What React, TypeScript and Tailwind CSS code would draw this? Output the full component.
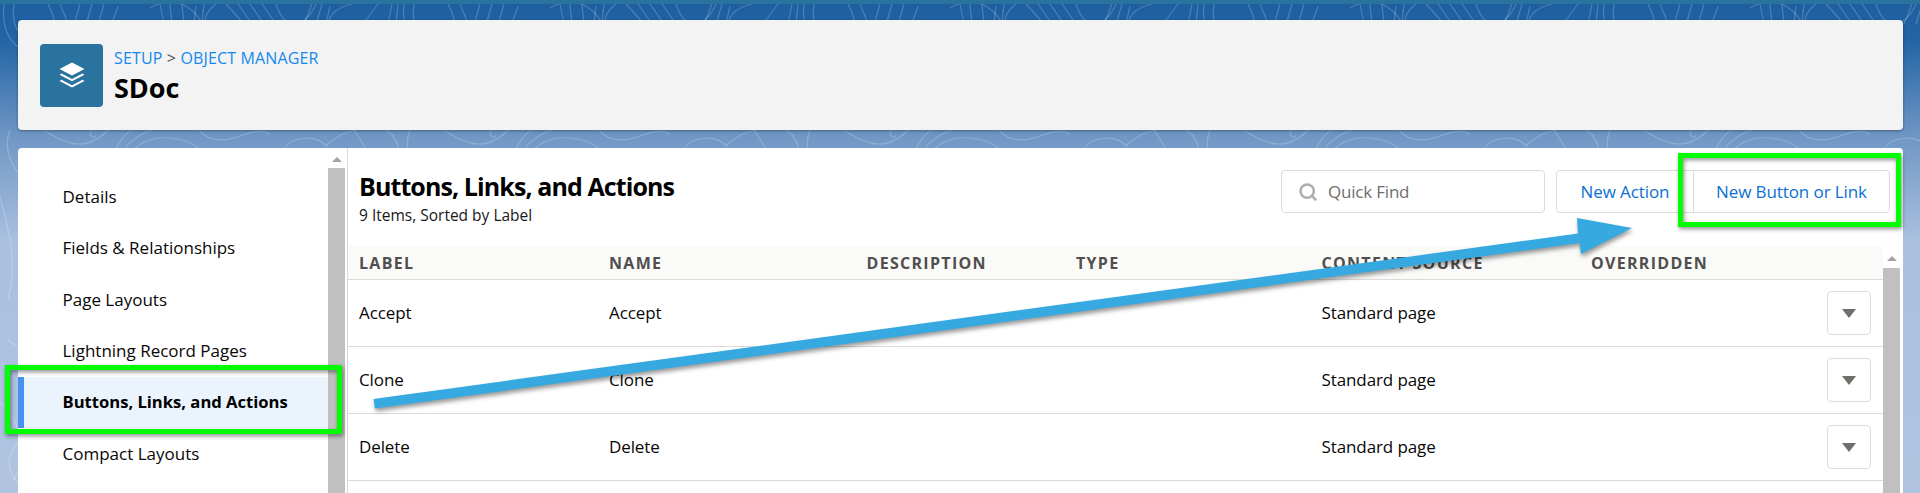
import { Search } from 'lucide-react'

const SIDE_ITEMS = ['Details', 'Fields & Relationships', 'Page Layouts', 'Lightning Record Pages', 'Buttons, Links, and Actions', 'Compact Layouts']
const COLUMNS = ['LABEL', 'NAME', 'DESCRIPTION', 'TYPE', 'CONTENT SOURCE', 'OVERRIDDEN']
const ROWS = ['Accept', 'Clone', 'Delete']
const GRID = 'grid grid-cols-[250px_257.5px_209.5px_245.5px_269.5px_1fr] pl-[11px] pr-3'

// contour lines behind the cards, one tile gets repeated over the page
const CONTOURS = [
  'M14 4C10 30 24 44 42 40S56 20 48 4',
  'M4 4C0 44 24 58 52 52S68 22 60 4',
  'M80 4L64 60M92 4L76 60M104 4L88 60M118 6L100 56',
  'M150 8C170 -4 196 0 210 40',
  'M160 4L164 24M170 4L172 24M182 4L184 24',
  'M196 6L192 40M204 4L200 40',
  'M216 4C208 10 206 14 204 24',
  'M226 4L244 24M238 4L252 24M250 4L264 24M262 4L276 24',
  'M276 4C284 30 304 30 316 4',
  'M312 4L304 24M322 4L316 24M330 6L326 24',
  'M352 4C336 8 330 14 328 24',
  'M378 4C372 12 370 16 362 24',
  'M392 4L388 24M398 4L396 24',
  'M10 130C2 150 14 180 40 186M-4 180C4 220 20 250 8 300',
  'M44 130C70 148 90 150 110 128C96 118 74 120 60 126',
  'M92 130C88 134 92 140 96 136',
  'M114 152C122 136 130 130 136 128M122 152C130 140 140 134 152 130',
  'M132 152C146 134 180 132 204 152',
  'M198 128C206 142 224 142 240 136C250 132 262 130 270 134',
  'M284 150C290 136 316 134 326 146C336 136 344 132 366 128',
  'M354 130L368 152M386 130C396 136 398 146 400 152',
  'M8 340C40 360 60 410 20 440C0 460 10 480 30 493',
  'M-2 400C20 420 30 450 14 480',
]

function Contours() {
  return (
    <svg className="absolute inset-0 h-full w-full" aria-hidden>
      <defs>
        <pattern id="topo" width="400" height="493" patternUnits="userSpaceOnUse">
          {CONTOURS.map(d => (
            <path key={d} d={d} fill="none" stroke="#fff" strokeOpacity="0.2" strokeWidth="1.2" />
          ))}
        </pattern>
      </defs>
      <rect width="100%" height="100%" fill="url(#topo)" />
    </svg>
  )
}

function StackIcon() {
  return (
    <svg viewBox="0 0 26 26" className="h-[26px] w-[26px]" fill="#fff" aria-hidden>
      <path d="M13 0.5L25.5 7L13 13.5L0.5 7Z" />
      <path d="M2.5 11.5L13 17L23.5 11.5L25.5 12.8L13 19.3L0.5 12.8Z" />
      <path d="M2.5 17.7L13 23.2L23.5 17.7L25.5 19L13 25.5L0.5 19Z" />
    </svg>
  )
}

function Scrollbar({ thumbTop, arrowTop }: { thumbTop: string; arrowTop: string }) {
  return (
    <div className="flex w-[17px] shrink-0 flex-col items-center">
      <div className={`${arrowTop} h-0 w-0 border-x-[5px] border-b-[5px] border-x-transparent border-b-[#a3a3a3]`} />
      <div className={`${thumbTop} w-full flex-1 bg-[#c0c0c0]`} />
    </div>
  )
}

export default function App() {
  return (
    <div className="relative h-[493px] overflow-hidden bg-[linear-gradient(180deg,#1c5ea0_0px,#2264a5_40px,#7298c6_140px,#a9c0de_240px,#b0c4e0_493px)] font-['Open_Sans',sans-serif] text-[#080707]">
      <Contours />

      <div className="relative h-[4px] bg-[#2a739f]" />

      <div className="relative flex flex-col pl-[18px] pr-[17px] pt-4">
        <header className="flex h-[110px] items-center gap-[11px] rounded bg-[#f3f3f3] pl-[22px] shadow-[0_1px_3px_rgba(0,0,0,0.35)]">
          <div className="flex h-[63px] w-[63px] items-center justify-center rounded bg-[#2a739f]">
            <StackIcon />
          </div>
          <div>
            <p className="text-[16px] leading-5 tracking-[0.15px]">
              <span className="text-[#1589ee]">SETUP</span>
              <span className="text-[#514f4d]"> &gt; </span>
              <span className="text-[#1589ee]">OBJECT MANAGER</span>
            </p>
            <h1 className="mt-[6px] text-[27px] leading-7 font-bold text-black">SDoc</h1>
          </div>
        </header>

        <div className="mt-[18px] flex h-[345px] rounded-t bg-white">
          <nav className="flex w-[310px] shrink-0 flex-col pt-[23px]">
            {SIDE_ITEMS.map(item =>
              item === 'Buttons, Links, and Actions' ? (
                <a key={item} className="flex h-[51.4px] items-center border-l-[6px] border-[#4a90f0] bg-[#ebf3fc] pl-[38.5px] text-[16.6px] font-bold text-black">
                  {item}
                </a>
              ) : (
                <a key={item} className="flex h-[51.4px] items-center pl-[44.5px] text-[17px]">
                  {item}
                </a>
              ),
            )}
          </nav>
          <Scrollbar arrowTop="mt-[9px]" thumbTop="mt-[6px]" />

          <main className="ml-[2px] flex min-w-0 flex-1 flex-col border-l border-[#dddbda]">
            <div className="flex h-[98px] shrink-0 items-start justify-between pl-[11px] pr-[13px]">
              <div className="pt-[22px]">
                <h2 className="text-[25px] leading-8 font-bold tracking-[-0.9px] text-black">Buttons, Links, and Actions</h2>
                <p className="mt-[3px] text-[15.5px] leading-5 text-[#181818]">9 Items, Sorted by Label</p>
              </div>
              <div className="flex gap-[11px] pt-[22px]">
                <label className="flex h-[43px] w-[264px] items-center gap-[10px] rounded border border-[#dddbda] pl-4">
                  <Search className="h-[20px] w-[20px] text-[#b0adab]" strokeWidth={3} />
                  <span className="pt-px text-[17px] tracking-[-0.2px] text-[#706e6b]">Quick Find</span>
                </label>
                <div className="flex h-[43px] overflow-hidden rounded border border-[#dddbda] text-[17px] tracking-[-0.1px] text-[#0b6fd6]">
                  <button type="button" className="w-[136px] pt-px">New Action</button>
                  <button type="button" className="w-[196px] border-l border-[#dddbda] pt-px">New Button or Link</button>
                </div>
              </div>
            </div>

            <div className="flex min-h-0 flex-1">
              <div className="min-w-0 flex-1">
                <div className={`${GRID} h-[34px] items-center border-b border-[#dddbda] bg-[#fafaf9] text-[16px] font-bold tracking-[1.3px] text-[#514f4d]`}>
                  {COLUMNS.map(col => (
                    <span key={col}>{col}</span>
                  ))}
                </div>
                {ROWS.map(row => (
                  <div key={row} className={`${GRID} h-[67px] items-center border-b border-[#dddbda] text-[17px] tracking-[-0.1px]`}>
                    <span>{row}</span>
                    <span>{row}</span>
                    <span />
                    <span />
                    <span>Standard page</span>
                    <button type="button" className="ml-auto flex h-[44px] w-[44px] items-center justify-center rounded border border-[#dddbda]">
                      <span className="h-0 w-0 border-x-[7px] border-t-[9px] border-x-transparent border-t-[#706e6b]" />
                    </button>
                  </div>
                ))}
              </div>
              <Scrollbar arrowTop="mt-[10px]" thumbTop="mt-[7px]" />
              <div className="w-[3px]" />
            </div>
          </main>
        </div>
      </div>

      {/* annotations drawn on top of the screenshot */}
      <div className="absolute left-[5px] top-[365px] h-[69px] w-[337px] border-[5px] border-[#00ff00] drop-shadow-[1px_2px_2px_rgba(0,0,0,0.45)]" />
      <div className="absolute left-[1678px] top-[153px] h-[74px] w-[223px] border-[5px] border-[#00ff00] drop-shadow-[1px_2px_2px_rgba(0,0,0,0.45)]" />
      <svg className="absolute inset-0 h-full w-full drop-shadow-[1px_3px_2px_rgba(0,0,0,0.4)]" aria-hidden>
        <polygon points="373.5,399 1578,233.5 1577,218 1632,228 1581,254 1579.5,243 375,408.5" fill="#36a9e1" />
      </svg>
    </div>
  )
}
